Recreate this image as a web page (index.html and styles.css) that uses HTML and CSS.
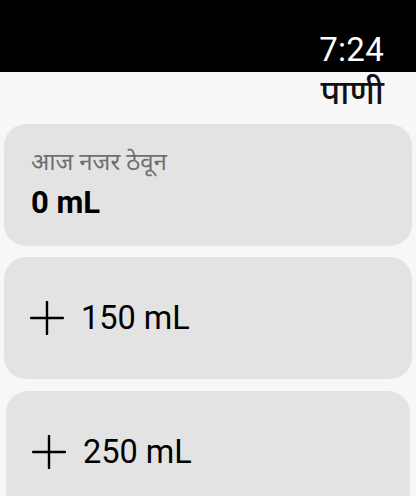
FILE: index.html
```html
<!DOCTYPE html>
<html lang="mr">

<head>
    <meta charset="UTF-8">
    <meta name="viewport" content="width=device-width, initial-scale=1.0">
    <title>पाणी</title>
    <link rel="stylesheet" href="styles.css">
</head>

<body>
    <div class="status-bar">
        <span class="time">7:24</span>
    </div>
    <div class="screen">
        <h1 class="title">पाणी</h1>
        <div class="card summary">
            <div class="label">आज नजर ठेवून</div>
            <div class="total">0 mL</div>
        </div>
        <button class="card add-btn">
            <svg class="plus" width="34" height="34" viewBox="0 0 34 34">
                <path d="M1 17H33M17 1V33" stroke="#000" stroke-width="2.4" stroke-linecap="round" fill="none"/>
            </svg>
            <span>150 mL</span>
        </button>
        <button class="card add-btn last">
            <svg class="plus" width="34" height="34" viewBox="0 0 34 34">
                <path d="M1 17H33M17 1V33" stroke="#000" stroke-width="2.4" stroke-linecap="round" fill="none"/>
            </svg>
            <span>250 mL</span>
        </button>
    </div>
</body>

</html>
```

FILE: styles.css
```css
body {
    margin: 0;
    padding: 0;
    background-color: #f7f7f7;
    font-family: Roboto, "Noto Sans", sans-serif;
    overflow: hidden;
    height: 496px;
}

.status-bar {
    background-color: #000;
    height: 72px;
    display: flex;
    justify-content: flex-end;
    align-items: flex-end;
    padding-right: 32px;
    box-sizing: border-box;
}

.time {
    color: #fff;
    font-size: 33px;
    line-height: 32px;
    margin-bottom: 6px;
    letter-spacing: 0.3px;
}

.screen {
    display: flex;
    flex-direction: column;
    padding: 0 4px;
}

.title {
    margin: 0;
    font-size: 34px;
    font-weight: 500;
    color: #111;
    text-align: right;
    padding-right: 28px;
    line-height: 40px;
    height: 52px;
}

.card {
    background-color: #e3e3e3;
    border-radius: 22px;
    height: 122px;
    box-sizing: border-box;
    margin-bottom: 11px;
}

.summary {
    padding: 24px 27px 0;
}

.label {
    color: #6f6f6f;
    font-size: 24px;
    line-height: 28px;
}

.total {
    color: #000;
    font-size: 31px;
    font-weight: bold;
    line-height: 36px;
    margin-top: 9px;
}

.add-btn {
    border: none;
    width: 100%;
    display: flex;
    align-items: center;
    padding: 0 26px;
    font-family: inherit;
    font-size: 32.5px;
    color: #000;
    gap: 17px;
}

.add-btn.last {
    width: calc(100% - 4px);
    margin-left: 2px;
    margin-top: 1px;
}
```
